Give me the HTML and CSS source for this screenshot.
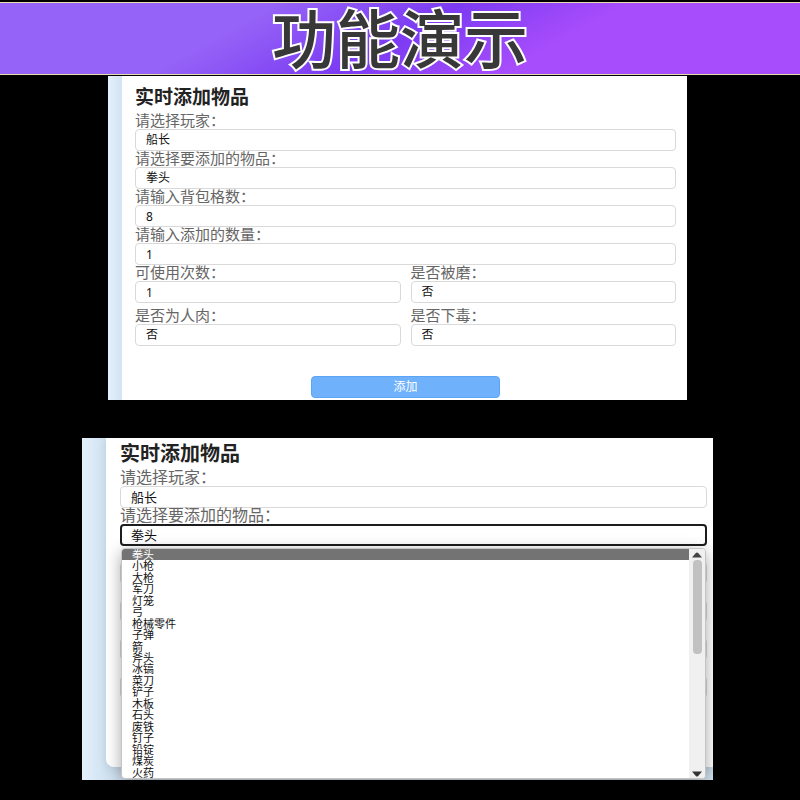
FILE: index.html
```html
<!DOCTYPE html>
<html lang="zh-CN">
<head>
    <meta charset="UTF-8">
    <meta name="viewport" content="width=device-width, initial-scale=1.0">
    <title>功能演示</title>
    <link rel="stylesheet" href="styles.css">
</head>
<body>
    <!-- Banner -->
    <header class="banner">
        <h1 class="banner-title">功能演示</h1>
    </header>

    <main>
        <!-- Form -->
        <section class="panel">
            <form class="card">
                <h2 class="card-title">实时添加物品</h2>
                <div class="field">
                    <label for="player">请选择玩家：</label>
                    <select id="player" class="control"><option>船长</option></select>
                </div>
                <div class="field">
                    <label for="item">请选择要添加的物品：</label>
                    <select id="item" class="control"><option>拳头</option></select>
                </div>
                <div class="field">
                    <label for="slot">请输入背包格数：</label>
                    <input id="slot" class="control" type="text" value="8">
                </div>
                <div class="field">
                    <label for="amount">请输入添加的数量：</label>
                    <input id="amount" class="control" type="text" value="1">
                </div>
                <div class="field-grid">
                    <div class="field">
                        <label for="uses">可使用次数：</label>
                        <input id="uses" class="control" type="text" value="1">
                    </div>
                    <div class="field">
                        <label for="ground">是否被磨：</label>
                        <select id="ground" class="control"><option>否</option></select>
                    </div>
                    <div class="field">
                        <label for="flesh">是否为人肉：</label>
                        <select id="flesh" class="control"><option>否</option></select>
                    </div>
                    <div class="field">
                        <label for="poison">是否下毒：</label>
                        <select id="poison" class="control"><option>否</option></select>
                    </div>
                </div>
                <button class="submit" type="button">添加</button>
            </form>
        </section>

        <!-- Form with the item list open -->
        <section class="panel panel-open">
            <form class="card">
                <h2 class="card-title">实时添加物品</h2>
                <div class="field">
                    <label for="player2">请选择玩家：</label>
                    <select id="player2" class="control"><option>船长</option></select>
                </div>
                <div class="field">
                    <label for="item2">请选择要添加的物品：</label>
                    <select id="item2" class="control focused"><option>拳头</option></select>
                    <div class="menu">
                        <ul class="menu-list" role="listbox" aria-label="物品">
                            <li class="selected" role="option" aria-selected="true">拳头</li>
                            <li role="option">小枪</li>
                            <li role="option">大枪</li>
                            <li role="option">军刀</li>
                            <li role="option">灯笼</li>
                            <li role="option">弓</li>
                            <li role="option">枪械零件</li>
                            <li role="option">子弹</li>
                            <li role="option">箭</li>
                            <li role="option">斧头</li>
                            <li role="option">冰镐</li>
                            <li role="option">菜刀</li>
                            <li role="option">铲子</li>
                            <li role="option">木板</li>
                            <li role="option">石头</li>
                            <li role="option">废铁</li>
                            <li role="option">钉子</li>
                            <li role="option">铅锭</li>
                            <li role="option">煤炭</li>
                            <li role="option">火药</li>
                        </ul>
                        <div class="scrollbar">
                            <svg width="10" height="6" viewBox="0 0 10 6"><path d="M0 5.5 L3.8 1 Q5 0 6.2 1 L10 5.5Z" fill="#444"/></svg>
                            <div class="thumb"></div>
                            <svg width="10" height="6" viewBox="0 0 10 6"><path d="M0 .5 L3.8 5 Q5 6 6.2 5 L10 .5Z" fill="#333"/></svg>
                        </div>
                    </div>
                </div>
                <div class="covered"></div>
                <div class="covered"></div>
                <div class="covered"></div>
                <div class="covered"></div>
            </form>
        </section>
    </main>
</body>
</html>
```
FILE: styles.css
```css
* {
    margin: 0;
    padding: 0;
    box-sizing: border-box;
}

body {
    min-height: 100vh;
    padding-top: 2px;
    background: #000;
    font-family: "Noto Sans", "Noto Sans CJK SC", sans-serif;
}

/* Banner */
.banner {
    height: 73px;
    padding-bottom: 7px;
    display: flex;
    align-items: center;
    justify-content: center;
    border-top: 1px solid #e6dcae;
    border-bottom: 1px solid #e6dcae;
    background: linear-gradient(151deg, #9563f7 0%, #9563f7 30%, #7c3bf2 50%, #a84dfc 68%, #a84dfc 100%);
}

.banner-title {
    font-family: "Noto Sans CJK SC", sans-serif;
    font-size: 64px;
    line-height: 64px;
    font-weight: 500;
    color: #383838;
    -webkit-text-stroke: 4px #fff;
    paint-order: stroke fill;
}

/* Panels */
.panel {
    margin: 1px 113px 0 108px;
    padding-left: 14px;
    overflow: hidden;
    background: linear-gradient(90deg, #e3f1fc, #d3e3f1 14px);
}

.card {
    padding: 9px 11px 2px 13px;
    background: #fff;
}

.card-title {
    margin-bottom: 4px;
    font-size: 19px;
    line-height: 24px;
    font-weight: 700;
    color: #222;
}

/* Fields */
.field {
    position: relative;
}

.field label {
    display: block;
    padding-bottom: 2px;
    font-size: 15px;
    line-height: 14px;
    color: #666;
}

.control {
    display: block;
    width: 100%;
    height: 22px;
    padding: 0 10px;
    appearance: none;
    border: 1px solid #d9d9d9;
    border-radius: 4px;
    background: #fff;
    color: #111;
    font-family: inherit;
    font-size: 12px;
    line-height: 20px;
}

.field-grid {
    display: grid;
    grid-template-columns: 1fr 1fr;
    gap: 5px 10px;
}

.submit {
    display: block;
    width: 35%;
    height: 22px;
    margin: 30px auto 0;
    border: 1px solid #5ba5f8;
    border-radius: 4px;
    background: #6fb1fb;
    color: #fff;
    font-family: inherit;
    font-size: 12px;
    line-height: 20px;
}

/* Panel with the open list */
.panel-open {
    height: 342px;
    margin: 38px 87px 0 82px;
    padding-left: 24px;
    background: linear-gradient(90deg, #e3f1fc, #d0e1f0 24px);
}

.panel-open .card {
    height: 329px;
    padding: 4px 6px 0 14px;
    border-radius: 0 0 0 8px;
    box-shadow: 0 2px 10px rgba(0, 0, 0, 0.1);
}

.panel-open .card-title {
    font-size: 20px;
}

.panel-open .field label {
    font-size: 16px;
}

.panel-open .control {
    font-size: 13px;
}

.panel-open .focused {
    border: 2px solid #1d1d1f;
    padding: 0 9px;
    line-height: 18px;
}

.covered {
    height: 22px;
    margin-top: 16px;
    border: 1px solid #d9d9d9;
    border-radius: 4px;
}

.menu {
    position: absolute;
    top: 40px;
    left: 1px;
    right: 1px;
    height: 231px;
    display: flex;
    overflow: hidden;
    border: 1px solid #c4c4c4;
    border-radius: 4px;
    background: #fff;
    box-shadow: 0 4px 16px rgba(0, 0, 0, 0.35);
}

.menu-list {
    flex: 1;
    display: grid;
    grid-auto-rows: 1fr;
    list-style: none;
    font-family: "Noto Sans CJK SC", sans-serif;
    font-size: 11px;
    line-height: 11px;
    color: #111;
}

.menu-list li {
    padding-left: 10px;
}

.menu-list .selected {
    background: #737373;
    color: #fff;
}

.scrollbar {
    width: 16px;
    padding: 3px 0 1px;
    display: flex;
    flex-direction: column;
    align-items: center;
    background: #f0f0f0;
}

.thumb {
    width: 9px;
    height: 94px;
    margin: 2px 0 auto;
    border-radius: 4px;
    background: #c1c1c1;
}
```
